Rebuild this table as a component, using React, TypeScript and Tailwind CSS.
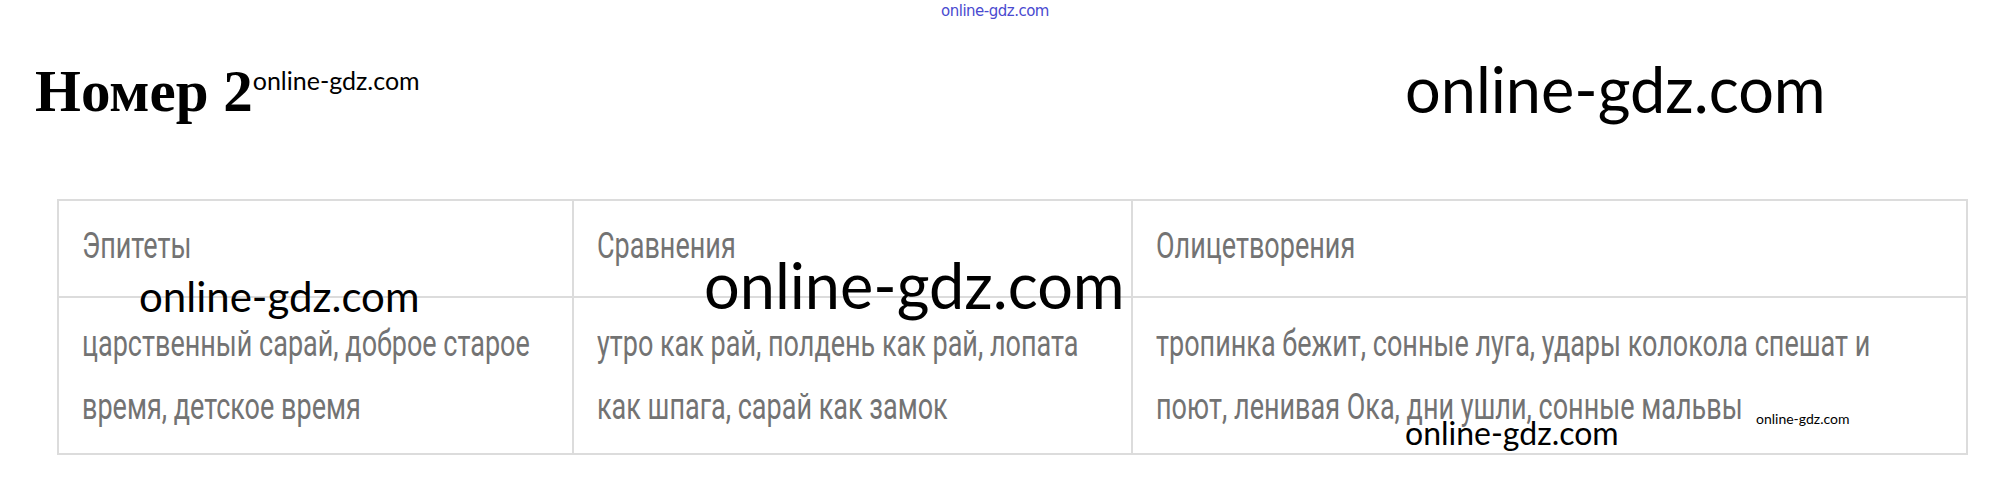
const rows = {
  head: ["Эпитеты", "Сравнения", "Олицетворения"],
  body: [
    ["царственный сарай, доброе старое", "время, детское время"],
    ["утро как рай, полдень как рай, лопата", "как шпага, сарай как замок"],
    ["тропинка бежит, сонные луга, удары колокола спешат и", "поют, ленивая Ока, дни ушли, сонные мальвы"],
  ],
};

export default function App() {
  return (
    <div className="relative h-[490px] w-[1990px] overflow-hidden bg-white">
      {/* top mark */}
      <div className="h-[23px] text-center font-['DejaVu_Sans',sans-serif] text-[15px] leading-[23px] tracking-[-0.5px] text-[#4a4ad0]">
        online-gdz.com
      </div>

      <div className="mt-[39px] flex items-start pl-[35px]">
        <h1 className="font-['Liberation_Serif',serif] text-[59px] font-bold leading-none text-black">Номер 2</h1>
        <span className="mt-[6px] font-['Lato',sans-serif] text-[25px] leading-none text-black">online-gdz.com</span>
      </div>

      <table className="ml-[57px] mt-[78px] w-[1909px] table-fixed border-collapse font-['Roboto',sans-serif] text-[36px] text-[#737373]">
        <colgroup>
          <col className="w-[515px]" />
          <col className="w-[559px]" />
          <col className="w-[835px]" />
        </colgroup>
        <tbody>
          <tr className="h-[97px]">
            {rows.head.map((h) => (
              <td key={h} className="border-2 border-[#dcdcdc] px-[23px] pb-[5px] align-middle leading-[44px]">
                <div className="origin-left scale-x-75 whitespace-nowrap">{h}</div>
              </td>
            ))}
          </tr>
          <tr className="h-[157px]">
            {rows.body.map((lines) => (
              <td key={lines[0]} className="border-2 border-[#dcdcdc] px-[23px] align-middle leading-[63px]">
                {lines.map((l) => (
                  <div key={l} className="origin-left scale-x-75 whitespace-nowrap">
                    {l}
                  </div>
                ))}
              </td>
            ))}
          </tr>
        </tbody>
      </table>

      {/* watermarks over the page */}
      <span className="absolute left-[1405px] top-[57px] font-['Lato',sans-serif] text-[63px] leading-none text-black">online-gdz.com</span>
      <span className="absolute left-[704px] top-[253px] font-['Lato',sans-serif] text-[63px] leading-none text-black">online-gdz.com</span>
      <span className="absolute left-[139px] top-[275px] font-['Lato',sans-serif] text-[42px] leading-none text-black">online-gdz.com</span>
      <span className="absolute left-[1405px] top-[417px] font-['Lato',sans-serif] text-[32px] leading-none text-black">online-gdz.com</span>
      <span className="absolute left-[1756px] top-[412px] font-['Lato',sans-serif] text-[14px] leading-none text-black">online-gdz.com</span>
    </div>
  );
}
